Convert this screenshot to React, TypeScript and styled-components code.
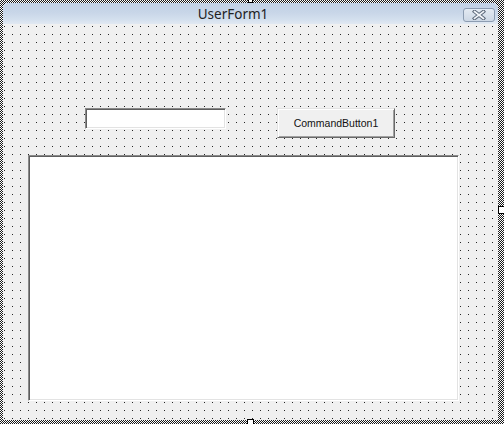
import styled, { createGlobalStyle } from "styled-components";

const GlobalStyle = createGlobalStyle`
  html, body {
    margin: 0;
    padding: 0;
    background: #ffffff;
  }
  body {
    font-family: "Noto Sans", "Liberation Sans", sans-serif;
  }
`;

// 選択枠（ハッチング）
const Selection = styled.div`
  position: relative;
  box-sizing: border-box;
  width: 504px;
  height: 424px;
  padding: 3px 6px 4px 3px;
  background: conic-gradient(#1a1a1a 25%, #ffffff 0 50%, #1a1a1a 0 75%, #ffffff 0) 0 0 / 2px 2px;
  overflow: hidden;
`;

const Handle = styled.div<{ $x: number; $y: number; $w: number; $h: number }>`
  position: absolute;
  left: ${(p) => p.$x}px;
  top: ${(p) => p.$y}px;
  width: ${(p) => p.$w}px;
  height: ${(p) => p.$h}px;
  box-sizing: border-box;
  background: #ffffff;
  border: 1px solid #000000;
`;

const Window = styled.div`
  display: flex;
  flex-direction: column;
  height: 100%;
  background: #f0f0f0;
  border-radius: 5px 5px 0 0;
  overflow: hidden;
`;

const TitleBar = styled.div`
  display: flex;
  align-items: center;
  height: 21px;
  flex-shrink: 0;
  background: linear-gradient(#c2d1e4 0%, #c8d6e8 45%, #d4e0ee 80%, #e2e9f2 100%);
`;

const Title = styled.div`
  flex: 1;
  text-align: center;
  font-family: "Noto Sans", sans-serif;
  font-size: 13.5px;
  color: #222222;
  padding-top: 1px;
`;

const CloseButton = styled.div`
  display: flex;
  align-items: center;
  justify-content: center;
  width: 32px;
  height: 14px;
  margin-right: 3px;
  margin-top: 3px;
  box-sizing: border-box;
  border: 1px solid #8d9db2;
  border-radius: 3px;
  background: linear-gradient(#e3eaf2, #cdd8e5);
`;

const Body = styled.div`
  flex: 1;
  display: flex;
  flex-direction: column;
  background-color: #f0f0f0;
  background-image: conic-gradient(at 1px 1px, transparent 75%, #262626 0);
  background-size: 8px 8px;
  background-position: 1px 2px;
`;

const ControlRow = styled.div`
  display: flex;
  align-items: flex-start;
  gap: 51px;
  padding: 84px 0 0 82px;
`;

const Sunken = styled.div`
  box-sizing: border-box;
  background: #ffffff;
  border-top: 1px solid #8a8a8a;
  border-left: 1px solid #8a8a8a;
  border-right: 1px solid #ffffff;
  border-bottom: 1px solid #ffffff;
  box-shadow: inset 1px 1px 0 #5e5e5e, inset -1px -1px 0 #e3e3e3;
`;

const TextBox = styled(Sunken)`
  width: 141px;
  height: 21px;
`;

const ListBox = styled(Sunken)`
  width: 431px;
  height: 246px;
  margin: 17px 0 0 25px;
`;

const CommandButton = styled.div`
  display: flex;
  align-items: center;
  justify-content: center;
  width: 118px;
  height: 30px;
  box-sizing: border-box;
  background: #f0f0f0;
  border-top: 1px solid #e3e3e3;
  border-left: 1px solid #e3e3e3;
  border-right: 1px solid #696969;
  border-bottom: 1px solid #696969;
  box-shadow: inset 1px 1px 0 #ffffff, inset -1px -1px 0 #a0a0a0;
  font-family: "Liberation Sans", Arial, sans-serif;
  font-size: 10.5px;
  color: #111111;
`;

function CloseIcon() {
  return (
    <svg width="14" height="10" viewBox="0 0 14 10">
      <g strokeLinecap="square">
        <path d="M2.5 1.5 L11.5 8.5 M11.5 1.5 L2.5 8.5" stroke="#5d6a7b" strokeWidth="3.6" />
        <path d="M2.5 1.5 L11.5 8.5 M11.5 1.5 L2.5 8.5" stroke="#f3f6fa" strokeWidth="1.6" />
      </g>
    </svg>
  );
}

export default function App() {
  return (
    <>
      <GlobalStyle />
      <Selection>
        <Window>
          <TitleBar>
            <Title>UserForm1</Title>
            <CloseButton>
              <CloseIcon />
            </CloseButton>
          </TitleBar>
          <Body>
            <ControlRow>
              <TextBox />
              <CommandButton>CommandButton1</CommandButton>
            </ControlRow>
            <ListBox />
          </Body>
        </Window>
        {/* サイズ変更ハンドル */}
        <Handle $x={248} $y={-1} $w={5} $h={4} />
        <Handle $x={498} $y={206} $w={7} $h={8} />
        <Handle $x={247} $y={419} $w={7} $h={6} />
      </Selection>
    </>
  );
}
